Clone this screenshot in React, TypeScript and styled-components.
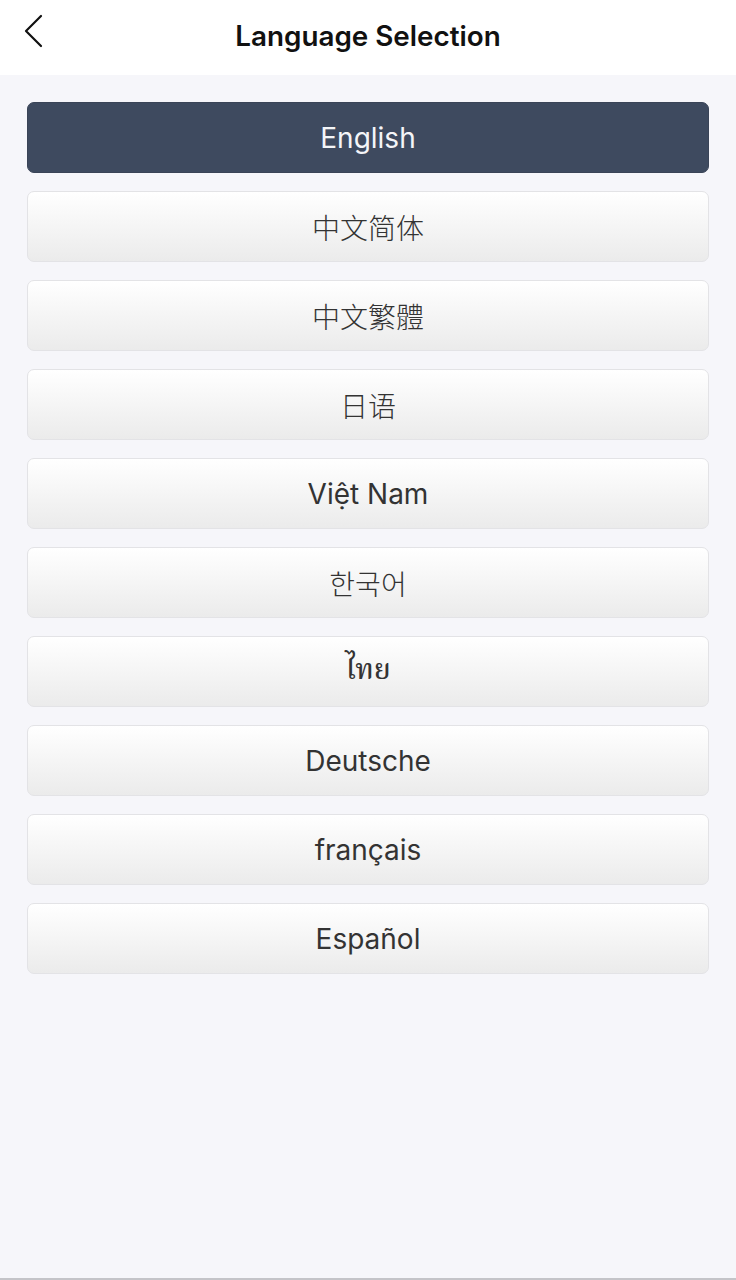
import React, { useState } from "react";
import styled, { createGlobalStyle } from "styled-components";

const GlobalStyle = createGlobalStyle`
  html, body {
    margin: 0;
    padding: 0;
    background: #f6f6fa;
  }
  body {
    font-family: Inter, "Noto Sans", "Noto Sans CJK SC", sans-serif;
  }
  * { box-sizing: border-box; }
`;

const Page = styled.div`
  min-height: 1280px;
  height: 1280px;
  display: flex;
  flex-direction: column;
  background: #f6f6fa;
  border-bottom: 2px solid #c4c4c8;
`;

const Header = styled.header`
  height: 75px;
  background: #ffffff;
  display: grid;
  grid-template-columns: 80px 1fr 80px;
  align-items: center;
  flex-shrink: 0;
`;

const BackButton = styled.button`
  border: none;
  background: transparent;
  padding: 0 0 0 22px;
  height: 75px;
  display: flex;
  align-items: flex-start;
  padding-top: 14px;
  cursor: pointer;
`;

const Title = styled.h1`
  margin: 0;
  text-align: center;
  font-family: Inter, "Noto Sans", sans-serif;
  font-weight: 600;
  font-size: 27.8px;
  color: #111111;
  padding-bottom: 4px;
`;

const List = styled.div`
  display: flex;
  flex-direction: column;
  gap: 18px;
  padding: 27px 27px 0 27px;
`;

const LangButton = styled.button<{ $active: boolean }>`
  height: 71px;
  width: 100%;
  border-radius: 7px;
  border: 1px solid ${(p) => (p.$active ? "#3a4457" : "#e3e3e6")};
  background: ${(p) =>
    p.$active
      ? "#3e4a5f"
      : "linear-gradient(to bottom, #ffffff 0%, #f6f6f6 45%, #ebebeb 100%)"};
  color: ${(p) => (p.$active ? "#f4f5f8" : "#333333")};
  font-family: Inter, "Noto Sans", "Noto Sans Thai", "Noto Sans CJK SC", sans-serif;
  font-size: 28px;
  font-weight: 400;
  display: flex;
  align-items: center;
  justify-content: center;
  cursor: pointer;
  padding: 0;
`;

const CjkText = styled.span<{ $lang: string }>`
  font-family: ${(p) =>
    p.$lang === "ko"
      ? '"Noto Sans CJK KR", sans-serif'
      : p.$lang === "tc"
      ? '"Noto Sans CJK TC", sans-serif'
      : '"Noto Sans CJK SC", sans-serif'};
  font-weight: 300;
`;

const ThaiText = styled.span`
  font-family: "Noto Serif Thai", "Noto Sans Thai Looped", "Noto Sans Thai", "DejaVu Sans", serif;
  font-weight: 500;
`;

type Lang = { id: string; label: string; kind: "latin" | "cjk" | "thai"; lang?: string };

const languages: Lang[] = [
  { id: "en", label: "English", kind: "latin" },
  { id: "zh-cn", label: "中文简体", kind: "cjk", lang: "sc" },
  { id: "zh-tw", label: "中文繁體", kind: "cjk", lang: "tc" },
  { id: "ja", label: "日语", kind: "cjk", lang: "ja" },
  { id: "vi", label: "Việt Nam", kind: "latin" },
  { id: "ko", label: "한국어", kind: "cjk", lang: "ko" },
  { id: "th", label: "ไทย", kind: "thai" },
  { id: "de", label: "Deutsche", kind: "latin" },
  { id: "fr", label: "français", kind: "latin" },
  { id: "es", label: "Español", kind: "latin" },
];

function BackIcon() {
  return (
    <svg width="24" height="34" viewBox="0 0 24 34" fill="none">
      <path d="M19 2 L4 17 L19 32" stroke="#111" strokeWidth="2.2" strokeLinecap="round" strokeLinejoin="round" />
    </svg>
  );
}

export default function App() {
  const [selected, setSelected] = useState("en");
  return (
    <>
      <GlobalStyle />
      <Page>
        <Header>
          <BackButton aria-label="Back">
            <BackIcon />
          </BackButton>
          <Title>Language Selection</Title>
          <div />
        </Header>
        <List>
          {languages.map((l) => (
            <LangButton key={l.id} $active={selected === l.id} onClick={() => setSelected(l.id)}>
              {l.kind === "cjk" ? (
                <CjkText $lang={l.lang || "sc"}>{l.label}</CjkText>
              ) : l.kind === "thai" ? (
                <ThaiText>{l.label}</ThaiText>
              ) : (
                l.label
              )}
            </LangButton>
          ))}
        </List>
      </Page>
    </>
  );
}
